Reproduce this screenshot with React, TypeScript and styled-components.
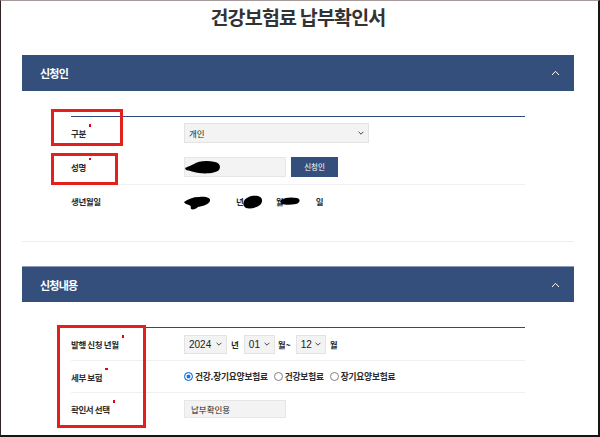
import styled, { createGlobalStyle } from "styled-components";

const GlobalStyle = createGlobalStyle`
  html, body {
    margin: 0;
    padding: 0;
    background: #fff;
  }
  body {
    font-family: "Noto Sans CJK KR", "Noto Sans", sans-serif;
  }
  * {
    box-sizing: border-box;
  }
`;

const Frame = styled.div`
  position: relative;
  width: 600px;
  height: 437px;
  overflow: hidden;
  background: #fff;
  border-left: 1px solid #2e2424;
  border-top: 1px solid #a89b9b;
  border-right: 2px solid #151515;
  border-bottom: 2px solid #151515;
  padding: 0 24px 0 21px;
`;

const Title = styled.h1`
  margin: 4px 0 26px;
  height: 24px;
  line-height: 24px;
  text-align: center;
  font-size: 19.5px;
  font-weight: 700;
  letter-spacing: -0.8px;
  color: #333;
`;

const Section = styled.section`
  border-bottom: 1px solid #eeeeee;
  margin-bottom: 24px;
`;

const Bar = styled.div<{ $topLine?: boolean }>`
  height: 36px;
  display: flex;
  align-items: center;
  justify-content: space-between;
  padding: 0 14px 0 18px;
  background: #344f7b;
  border-top: ${(p) => (p.$topLine ? "1px solid #8d9bb3" : "none")};
  color: #fff;
  font-size: 11px;
  font-weight: 700;
  letter-spacing: -0.8px;
`;

const Body = styled.div`
  padding: 25px 49px 24px;
`;

const Table = styled.div`
  border-top: 1px solid #2c4a7e;
`;

const Row = styled.div<{ $h: number; $line?: boolean }>`
  display: grid;
  grid-template-columns: 113px 1fr;
  align-items: center;
  height: ${(p) => p.$h + (p.$line ? 1 : 0)}px;
  border-bottom: ${(p) => (p.$line ? "1px solid #efefef" : "none")};
`;

const Label = styled.div`
  font-size: 8.5px;
  font-weight: 700;
  color: #2b2b2b;
  letter-spacing: -0.4px;
  white-space: nowrap;
`;

const Req = styled.span`
  display: inline-block;
  width: 2.5px;
  height: 2.5px;
  margin-left: 3px;
  background: #e60012;
  vertical-align: top;
  transform: translateY(-3px);
`;

const Value = styled.div`
  display: flex;
  align-items: center;
  position: relative;
  height: 100%;
`;

const SelectBox = styled.div<{ $w: number; $h?: number; $digits?: boolean }>`
  width: ${(p) => p.$w}px;
  height: ${(p) => p.$h ?? 20}px;
  display: flex;
  align-items: center;
  justify-content: space-between;
  padding: 0 4px 0 4px;
  background: #f3f3f3;
  border: 1px solid #e3e3e3;
  color: #222;
  font-family: ${(p) =>
    p.$digits ? '"Liberation Sans", Arial, sans-serif' : '"Noto Sans CJK KR", sans-serif'};
  font-size: ${(p) => (p.$digits ? "10px" : "8.5px")};
`;

const Field = styled.div<{ $h?: number }>`
  width: 102px;
  height: ${(p) => p.$h ?? 20}px;
  display: flex;
  align-items: center;
  padding: 0 6px;
  background: #f3f3f3;
  border: 1px solid #e6e6e6;
  font-size: 8.5px;
  color: #222;
`;

const Button = styled.div`
  width: 47px;
  height: 20px;
  margin-left: 5px;
  display: flex;
  align-items: center;
  justify-content: center;
  background: #344f7b;
  color: #fff;
  font-size: 7.5px;
`;

const Unit = styled.span<{ $ml?: number; $mr?: number }>`
  font-size: 8.5px;
  font-weight: 700;
  color: #2b2b2b;
  margin-left: ${(p) => p.$ml ?? 0}px;
  margin-right: ${(p) => p.$mr ?? 0}px;
`;

const Birth = styled.div`
  display: flex;
  align-items: center;
  gap: 32px;
  padding-left: 52px;
  font-size: 8.5px;
  font-weight: 700;
  color: #2b2b2b;
`;

const Redact = styled.svg`
  position: absolute;
  left: 0;
  top: 0;
`;

const RadioGroup = styled.div`
  display: flex;
  align-items: center;
  gap: 6px;
`;

const RadioItem = styled.label`
  display: flex;
  align-items: center;
  gap: 2px;
  font-size: 8.7px;
  font-weight: 700;
  color: #2a2a2a;
  letter-spacing: -0.2px;
`;

const RadioDot = styled.span<{ $on?: boolean }>`
  width: 9px;
  height: 9px;
  border-radius: 50%;
  border: 1px solid ${(p) => (p.$on ? "#1a73e8" : "#808080")};
  background: ${(p) => (p.$on ? "#1a73e8" : "#fff")};
  box-shadow: ${(p) => (p.$on ? "inset 0 0 0 1.5px #fff" : "none")};
`;

const Mark = styled.div<{ $x: number; $y: number; $w: number; $h: number }>`
  position: absolute;
  left: ${(p) => p.$x - 1}px;
  top: ${(p) => p.$y - 1}px;
  width: ${(p) => p.$w}px;
  height: ${(p) => p.$h}px;
  border: 3px solid #e3201b;
  pointer-events: none;
`;

function Caret({ up }: { up?: boolean }) {
  return up ? (
    <svg width="9" height="6" viewBox="0 0 9 6">
      <path d="M1 5 L4.5 1.3 L8 5" fill="none" stroke="#fff" strokeWidth="1" />
    </svg>
  ) : (
    <svg width="6" height="4" viewBox="0 0 6 4">
      <path d="M0.6 0.8 L3 3.2 L5.4 0.8" fill="none" stroke="#333" strokeWidth="0.9" />
    </svg>
  );
}

function Blob({ d }: { d: string }) {
  return <path d={d} fill="#000" />;
}

export default function App() {
  return (
    <>
      <GlobalStyle />
      <Frame>
        <Title>건강보험료 납부확인서</Title>

        <Section>
          <Bar>
            <span>신청인</span>
            <Caret up />
          </Bar>
          <Body>
            <Table>
              <Row $h={32}>
                <Label>
                  구분<Req />
                </Label>
                <Value>
                  <SelectBox $w={185}>
                    <span>개인</span>
                    <Caret />
                  </SelectBox>
                </Value>
              </Row>
              <Row $h={35} $line>
                <Label>
                  성명<Req />
                </Label>
                <Value>
                  <Field>
                    <svg width="36" height="14" viewBox="0 0 36 14" style={{ marginLeft: -6 }}>
                      <Blob d="M0 8 C4 6 7 5 9 4 C13 1 22 0 30 2 C35 3 36 7 34 10 C31 13 22 14 14 13 C10 12.5 6 11 1 10 Z" />
                    </svg>
                  </Field>
                  <Button>신청인</Button>
                </Value>
              </Row>
              <Row $h={32}>
                <Label>생년월일</Label>
                <Value>
                  <Birth>
                    <span>년</span>
                    <span>월</span>
                    <span>일</span>
                  </Birth>
                  <Redact width="130" height="32" viewBox="0 0 130 32">
                    <Blob d="M0 17 C4 14 9 12 15 12 C22 11 27 13 26 16 C25 19 20 21 14 22 C12 24 9 25 7 24 C6 22 8 21 5 20 C3 19 1 19 0 17 Z" />
                    <Blob d="M60 16 C62 12 68 10 74 11 C79 12 79 17 76 20 C72 23 66 24 62 23 C59 21 59 19 60 16 Z" />
                    <Blob d="M97 15 C101 12 108 12 113 13 C117 14 116 18 112 19 C107 20 101 20 98 19 C96 18 96 16 97 15 Z" />
                  </Redact>
                </Value>
              </Row>
            </Table>
          </Body>
        </Section>

        <Section>
          <Bar $topLine>
            <span>신청내용</span>
            <Caret up />
          </Bar>
          <Body>
            <Table>
              <Row $h={32} $line>
                <Label>
                  발행 신청 년월<Req />
                </Label>
                <Value>
                  <SelectBox $w={43} $h={19} $digits>
                    <span>2024</span>
                    <Caret />
                  </SelectBox>
                  <Unit $ml={4} $mr={5}>
                    년
                  </Unit>
                  <SelectBox $w={31} $h={19} $digits>
                    <span>01</span>
                    <Caret />
                  </SelectBox>
                  <Unit $ml={3} $mr={5}>
                    월~
                  </Unit>
                  <SelectBox $w={30} $h={19} $digits>
                    <span>12</span>
                    <Caret />
                  </SelectBox>
                  <Unit $ml={4}>월</Unit>
                </Value>
              </Row>
              <Row $h={31} $line>
                <Label>
                  세부 보험<Req />
                </Label>
                <Value>
                  <RadioGroup>
                    <RadioItem>
                      <RadioDot $on />
                      건강.장기요양보험료
                    </RadioItem>
                    <RadioItem>
                      <RadioDot />
                      건강보험료
                    </RadioItem>
                    <RadioItem>
                      <RadioDot />
                      장기요양보험료
                    </RadioItem>
                  </RadioGroup>
                </Value>
              </Row>
              <Row $h={32}>
                <Label>
                  확인서 선택<Req />
                </Label>
                <Value>
                  <Field $h={18}>납부확인용</Field>
                </Value>
              </Row>
            </Table>
          </Body>
        </Section>

        <Mark $x={51} $y={109} $w={72} $h={37} />
        <Mark $x={51} $y={153} $w={67} $h={32} />
        <Mark $x={57} $y={325} $w={89} $h={103} />
      </Frame>
    </>
  );
}
